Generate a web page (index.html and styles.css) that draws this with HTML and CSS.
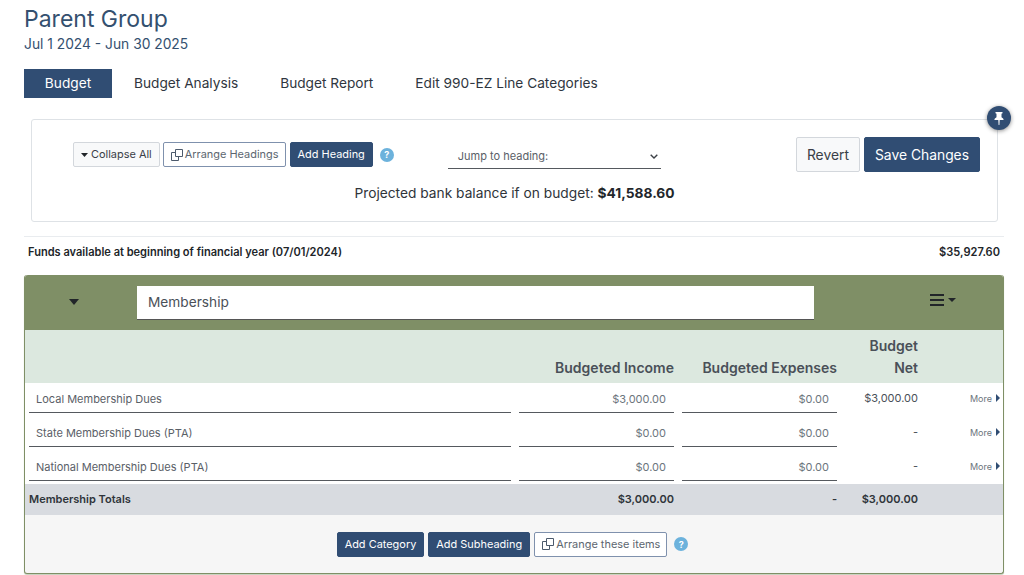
FILE: index.html
```html
<!DOCTYPE html>
<html lang="en">
<head>
<meta charset="utf-8">
<title>Parent Group Budget</title>
<link rel="stylesheet" href="styles.css">
</head>
<body>
<header class="page-head">
  <h1>Parent Group</h1>
  <p>Jul 1 2024 - Jun 30 2025</p>
</header>
<nav class="tabs">
  <a class="tab active">Budget</a>
  <a class="tab">Budget Analysis</a>
  <a class="tab">Budget Report</a>
  <a class="tab">Edit 990-EZ Line Categories</a>
</nav>
<section class="toolbar">
  <button class="pin" aria-label="Pin"><svg width="10" height="13" viewBox="0 0 10 13"><path fill="#fff" d="M1.5 0h7v1.3l-1 .5v3.4C9 6 9.600 7 9.600 8H5.700l-.3 5h-.8l-.3-5H.4c0-1 .6-2 2.100-2.800V1.800l-1-.5z"/></svg></button>
  <div class="tool-row">
    <div class="tool-left">
      <button class="btn light"><svg class="caret" width="7" height="4" viewBox="0 0 7 4"><path d="M0 0h7L3.500 4z"/></svg><span>Collapse All</span></button>
      <button class="btn outline"><svg class="copy" width="12" height="12" viewBox="0 0 12 12"><path d="M4.500.5h7v7h-7zM4.500 3.500h-4v8h7v-4"/></svg><span>Arrange Headings</span></button>
      <button class="btn solid"><span>Add Heading</span></button>
      <span class="help">?</span>
    </div>
    <div class="jump"><span>Jump to heading:</span><svg width="8" height="5" viewBox="0 0 8 5"><path d="M.7.7L4 4l3.300-3.300"/></svg></div>
    <div class="tool-right">
      <button class="btn big light">Revert</button>
      <button class="btn big solid">Save Changes</button>
    </div>
  </div>
  <p class="projected">Projected bank balance if on budget: <strong>$41,588.60</strong></p>
</section>
<div class="funds">
  <span>Funds available at beginning of financial year (07/01/2024)</span>
  <span>$35,927.60</span>
</div>
<section class="panel">
  <div class="panel-head">
    <svg class="head-caret" width="10" height="6" viewBox="0 0 10 6"><path d="M0 0h10L5 6z"/></svg>
    <div class="name-input"><span>Membership</span></div>
    <div class="menu">
      <svg width="14" height="12" viewBox="0 0 14 12"><path d="M0 0h14v2H0zM0 5h14v2H0zM0 10h14v2H0z"/></svg>
      <svg class="menu-caret" width="8" height="4" viewBox="0 0 8 4"><path d="M0 0h8L4 4z"/></svg>
    </div>
  </div>
  <div class="grid col-head">
    <span></span>
    <span>Budgeted Income</span>
    <span>Budgeted Expenses</span>
    <span>Budget<br>Net</span>
    <span></span>
  </div>
  <div class="rows">
    <div class="grid row">
      <div class="field">Local Membership Dues</div>
      <div class="field num">$3,000.00</div>
      <div class="field num">$0.00</div>
      <div class="net">$3,000.00</div>
      <a class="more">More<svg width="4" height="8" viewBox="0 0 4 8"><path d="M0 0l4 4-4 4z"/></svg></a>
    </div>
    <div class="grid row">
      <div class="field">State Membership Dues (PTA)</div>
      <div class="field num">$0.00</div>
      <div class="field num">$0.00</div>
      <div class="net">-</div>
      <a class="more">More<svg width="4" height="8" viewBox="0 0 4 8"><path d="M0 0l4 4-4 4z"/></svg></a>
    </div>
    <div class="grid row">
      <div class="field">National Membership Dues (PTA)</div>
      <div class="field num">$0.00</div>
      <div class="field num">$0.00</div>
      <div class="net">-</div>
      <a class="more">More<svg width="4" height="8" viewBox="0 0 4 8"><path d="M0 0l4 4-4 4z"/></svg></a>
    </div>
  </div>
  <div class="grid totals">
    <span>Membership Totals</span>
    <span>$3,000.00</span>
    <span>-</span>
    <span>$3,000.00</span>
    <span></span>
  </div>
  <div class="panel-foot">
    <button class="btn solid"><span>Add Category</span></button>
    <button class="btn solid"><span>Add Subheading</span></button>
    <button class="btn outline"><svg class="copy" width="12" height="12" viewBox="0 0 12 12"><path d="M4.500.5h7v7h-7zM4.500 3.500h-4v8h7v-4"/></svg><span>Arrange these items</span></button>
    <span class="help">?</span>
  </div>
</section>
</body>
</html>
```
FILE: styles.css
```css
* { box-sizing: border-box; }
html, body { margin: 0; height: 575px; overflow: hidden; }
body {
  padding: 0 20px 0 24px;
  background: #fff;
  color: #212529;
  font-family: Inter, "Liberation Sans", sans-serif;
  font-size: 14px;
}
button { font-family: inherit; cursor: pointer; }
.page-head { padding-top: 4px; height: 69px; color: #34506f; }
.page-head h1 { margin: 0; font-size: 23px; font-weight: 400; line-height: 30px; }
.page-head p { margin: 0; font-size: 13.8px; line-height: 20px; }
.tabs { display: flex; height: 29px; }
.tab {
  display: flex;
  align-items: center;
  height: 29px;
  padding: 0 21px 1px;
  color: #2f3640;
  font-size: 13.7px;
}
.tab.active { width: 89px; justify-content: center; padding: 0 1px 1px 0; background: linear-gradient(to right, #304d73 88px, transparent 88px); color: #fff; }
.toolbar {
  position: relative;
  margin: 21px 6px 0 7px;
  height: 103px;
  padding-top: 17px;
  border: 1px solid #dee2e6;
  border-radius: 3px;
}
.pin {
  position: absolute;
  top: -14px;
  right: -14px;
  width: 24px;
  height: 24px;
  padding: 0;
  display: flex;
  align-items: center;
  justify-content: center;
  border: 0;
  border-radius: 50%;
  background: #304d73;
  box-shadow: 0 1px 4px rgba(0,0,0,.45);
}
.tool-row { display: flex; align-items: flex-start; height: 35px; padding-left: 41px; }
.tool-left { display: flex; align-items: center; gap: 3px; margin-top: 5px; height: 25px; }
.btn {
  display: inline-flex;
  align-items: center;
  justify-content: center;
  height: 25px;
  padding: 0 7px;
  border: 1px solid #c5ccd6;
  border-radius: 2px;
  font-size: 10.95px;
  white-space: nowrap;
}
.btn span { position: relative; top: -1px; }
.btn.light { background: #f8f9fa; color: #3a4048; border-color: #d3d7dc; }
.btn.outline { padding-right: 6px; background: #fff; color: #5c6670; border-color: #7f91ad; }
.btn.solid { background: #304d73; color: #fff; border-color: #304d73; }
.tool-left .btn.solid { margin-left: 1px; }
.btn.big { height: 35px; font-size: 13.85px; padding: 0 10px; }
.caret { margin-right: 3px; fill: #212529; }
.copy { margin-right: 2px; fill: none; stroke: #4c5a6c; stroke-width: 1; }
.help {
  display: inline-flex;
  align-items: center;
  justify-content: center;
  width: 14px;
  height: 14px;
  margin-left: 4px;
  border-radius: 50%;
  background: #6cb2dc;
  color: #fff;
  font-size: 9px;
  font-weight: 700;
}
.jump {
  display: flex;
  align-items: center;
  justify-content: space-between;
  width: 213px;
  height: 23px;
  margin: 9px 0 0 54px;
  padding: 0 3px 2px 10px;
  border-bottom: 1px solid #55595e;
  color: #5a6067;
  font-size: 11px;
}
.jump svg { fill: none; stroke: #3c4046; stroke-width: 1.4; }
.tool-right { display: flex; gap: 4px; margin-left: auto; margin-right: 17px; }
.projected { margin: 11px 0 0; text-align: center; font-size: 13.75px; line-height: 20px; color: #2f343a; }
.projected strong { font-weight: 700; color: #23272b; }
.funds {
  display: flex;
  justify-content: space-between;
  align-items: center;
  height: 31px;
  margin-top: 14px;
  padding: 0 4px;
  border-top: 1px solid #e9ecef;
  font-size: 11.07px;
  font-weight: 600;
}
.panel {
  display: flex;
  flex-direction: column;
  height: 299px;
  margin-top: 8px;
  border: 1px solid #7f8f66;
  border-top: 0;
  border-radius: 3px;
  background: #f6f6f6;
  box-shadow: 0 1px 1px #c4d0bb;
}
.panel-head {
  display: flex;
  align-items: center;
  height: 55px;
  background: #7f8f66;
  border-radius: 3px 3px 0 0;
}
.head-caret { margin: 0 0 2px 44px; fill: #212529; }
.name-input {
  display: flex;
  align-items: center;
  width: 677px;
  height: 34px;
  margin-left: 58px;
  padding: 0 0 0 11px;
  background: #fff;
  border-bottom: 1px solid #555;
  color: #4a5058;
  font-size: 13.7px;
}
.menu { display: flex; align-items: flex-start; gap: 4px; margin: 0 0 6px 116px; }
.menu svg { fill: #212529; }
.menu-caret { margin-top: 4px; }
.grid {
  display: grid;
  grid-template-columns: 482px 155px 155px 73px 1fr;
  column-gap: 8px;
  padding: 0 3px 0 4px;
}
.grid > *:nth-child(n+2) { text-align: right; }
.col-head {
  height: 53px;
  align-items: end;
  background: #dce8df;
  color: #4a5058;
  font-size: 14px;
  font-weight: 600;
  line-height: 22px;
  padding-bottom: 4px;
}
.rows { height: 101px; background: #fff; }
.row { height: 34px; }
.field {
  height: 30px;
  padding: 3px 8px 0 7px;
  display: flex;
  align-items: center;
  border-bottom: 1px solid #55595e;
  color: #5a6067;
  font-size: 11px;
}
.field.num { justify-content: flex-end; color: #6c757d; }
.net { padding-top: 8px; color: #4a5058; font-size: 11px; line-height: 14px; }
.more {
  display: flex;
  align-items: center;
  justify-content: flex-end;
  gap: 4px;
  height: 30px;
  padding-top: 1px;
  color: #6c757d;
  font-size: 9px;
}
.more svg { fill: #304d73; margin-top: -2px; }
.totals {
  height: 31px;
  align-items: center;
  padding-bottom: 2px;
  background: #d8dbe0;
  color: #2f343a;
  font-size: 11px;
  font-weight: 600;
}
.panel-foot {
  flex: 1;
  display: flex;
  align-items: center;
  justify-content: center;
  gap: 4px;
  padding-right: 3px;
}
.panel-foot .btn span { top: 0; }
.panel-foot .help { margin-left: 3px; }
```
